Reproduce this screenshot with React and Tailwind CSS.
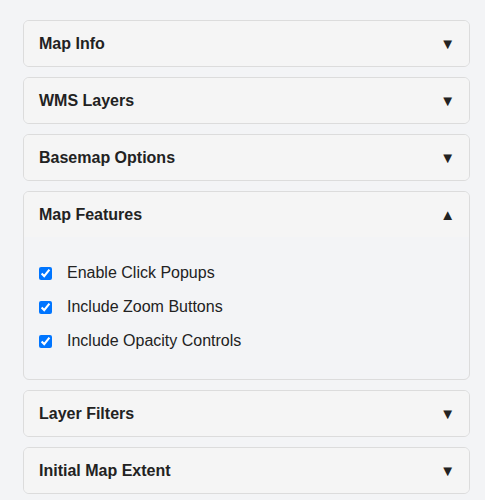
import { useState } from "react";

const sections = [
  { title: "Map Info" },
  { title: "WMS Layers" },
  { title: "Basemap Options" },
  {
    title: "Map Features",
    options: ["Enable Click Popups", "Include Zoom Buttons", "Include Opacity Controls"],
  },
  { title: "Layer Filters" },
  { title: "Initial Map Extent" },
];

export default function App() {
  const [open, setOpen] = useState("Map Features");
  const [checked, setChecked] = useState({
    "Enable Click Popups": true,
    "Include Zoom Buttons": true,
    "Include Opacity Controls": true,
  });

  return (
    <div
      className="min-h-[500px] bg-[#f3f4f6] pt-[20px] px-[23px] pr-[15px] flex flex-col gap-[10px]"
      style={{ fontFamily: '"Liberation Sans", Arial, sans-serif' }}
    >
      {sections.map((s) => {
        const isOpen = open === s.title;
        return (
          <div
            key={s.title}
            className="border border-[#dcdcdc] rounded-[6px] bg-[#f3f4f6] overflow-hidden"
          >
            <button
              onClick={() => setOpen(isOpen ? "" : s.title)}
              className="w-full h-[45px] flex items-center justify-between pl-[15px] pr-[14px] bg-[#f5f5f5] text-[#222] text-left"
            >
              <span className="text-[16px] font-bold">{s.title}</span>
              <span className="text-[15px] leading-none">{isOpen ? "▲" : "▼"}</span>
            </button>
            {isOpen && s.options && (
              <div className="pl-[15px] pt-[26px] pb-[28px] flex flex-col gap-[14px]">
                {s.options.map((o) => (
                  <label key={o} className="flex items-center h-[20px] text-[16px] text-[#222]">
                    <input
                      type="checkbox"
                      checked={checked[o]}
                      onChange={() => setChecked({ ...checked, [o]: !checked[o] })}
                      className="m-0 w-[13px] h-[13px]"
                    />
                    <span className="ml-[15px]">{o}</span>
                  </label>
                ))}
              </div>
            )}
          </div>
        );
      })}
    </div>
  );
}
